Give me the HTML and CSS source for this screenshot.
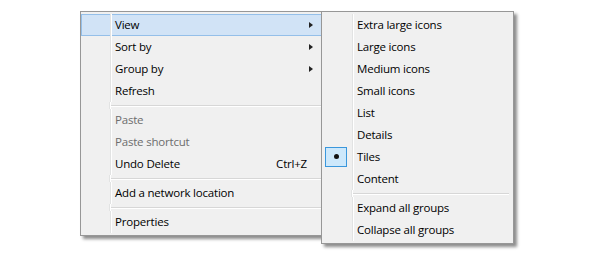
FILE: index.html
```html
<!DOCTYPE html>
<html>
<head>
<meta charset="utf-8">
<link rel="stylesheet" href="styles.css">
</head>
<body>
<div class="stage">
  <div class="menu main">
    <div class="item hover"><span class="icon"></span><span class="label">View</span><span class="arrow"></span></div>
    <div class="item"><span class="icon"></span><span class="label">Sort by</span><span class="arrow"></span></div>
    <div class="item"><span class="icon"></span><span class="label">Group by</span><span class="arrow"></span></div>
    <div class="item"><span class="icon"></span><span class="label">Refresh</span></div>
    <div class="sep"><span class="icon"></span><span class="line"></span></div>
    <div class="item disabled"><span class="icon"></span><span class="label">Paste</span></div>
    <div class="item disabled"><span class="icon"></span><span class="label">Paste shortcut</span></div>
    <div class="item"><span class="icon"></span><span class="label">Undo Delete</span><span class="key">Ctrl+Z</span></div>
    <div class="sep"><span class="icon"></span><span class="line"></span></div>
    <div class="item"><span class="icon"></span><span class="label">Add a network location</span></div>
    <div class="sep"><span class="icon"></span><span class="line"></span></div>
    <div class="item"><span class="icon"></span><span class="label">Properties</span></div>
  </div>
  <div class="menu sub">
    <div class="item"><span class="icon"></span><span class="label">Extra large icons</span></div>
    <div class="item"><span class="icon"></span><span class="label">Large icons</span></div>
    <div class="item"><span class="icon"></span><span class="label">Medium icons</span></div>
    <div class="item"><span class="icon"></span><span class="label">Small icons</span></div>
    <div class="item"><span class="icon"></span><span class="label">List</span></div>
    <div class="item"><span class="icon"></span><span class="label">Details</span></div>
    <div class="item"><span class="icon checked"><span class="bullet"></span></span><span class="label">Tiles</span></div>
    <div class="item"><span class="icon"></span><span class="label">Content</span></div>
    <div class="sep"><span class="icon"></span><span class="line"></span></div>
    <div class="item"><span class="icon"></span><span class="label">Expand all groups</span></div>
    <div class="item"><span class="icon"></span><span class="label">Collapse all groups</span></div>
  </div>
</div>
</body>
</html>
```
FILE: styles.css
```css
html, body {
  margin: 0;
  background: #ffffff;
  height: 258px;
}
body {
  font-family: "Open Sans", "Noto Sans", sans-serif;
  font-size: 11.5px;
  letter-spacing: -0.2px;
  color: #000;
  overflow: hidden;
}
.stage {
  position: relative;
  margin: 11px 0 0 80px;
  width: 440px;
}
.menu {
  background: #f0f0f0;
  border: 1px solid #979797;
  box-shadow: 3px 3px 3px rgba(0, 0, 0, 0.45);
  padding: 2px 2px 2px 0;
  display: flex;
  flex-direction: column;
}
.main {
  width: 243px;
}
.sub {
  position: absolute;
  left: 241px;
  top: 0;
  width: 187px;
  padding-left: 2px;
}
.item {
  height: 22px;
  flex: none;
  display: flex;
  align-items: center;
  box-sizing: border-box;
  border: 1px solid transparent;
  line-height: 20px;
}
.item.hover {
  background: #d1e3f6;
  border-color: #94bfe9;
}
.icon {
  width: 29px;
  flex: none;
  box-sizing: border-box;
  border-right: 1px solid #e2e3e3;
  box-shadow: 1px 0 0 #ffffff;
  margin-right: 4px;
  align-self: stretch;
}
.item .icon {
  margin-top: -1px;
  margin-bottom: -1px;
}
.sub .icon {
  width: 28px;
}
.icon.checked {
  position: relative;
}
.icon.checked::before {
  content: "";
  position: absolute;
  left: 0;
  top: 1px;
  width: 22px;
  height: 20px;
  box-sizing: border-box;
  background: #cde8fb;
  border: 1px solid #3a97dc;
}
.bullet {
  position: absolute;
  left: 9px;
  top: 8px;
  width: 5px;
  height: 5px;
  border-radius: 50%;
  background: #111;
}
.label {
  flex: 1;
  white-space: nowrap;
}
.disabled .label {
  color: #6d6d6d;
}
.key {
  margin-right: 16px;
}
.arrow {
  width: 0;
  height: 0;
  border-left: 4px solid #222;
  border-top: 3.5px solid transparent;
  border-bottom: 3.5px solid transparent;
  margin-right: 10px;
}
.sep {
  height: 7px;
  flex: none;
  display: flex;
  align-items: center;
}
.sep .icon {
  height: 100%;
  margin-right: 1px;
}
.sep .line {
  flex: 1;
  height: 1px;
  background: #d7d7d7;
  box-shadow: 0 1px 0 #ffffff;
  margin-right: 2px;
}
```
